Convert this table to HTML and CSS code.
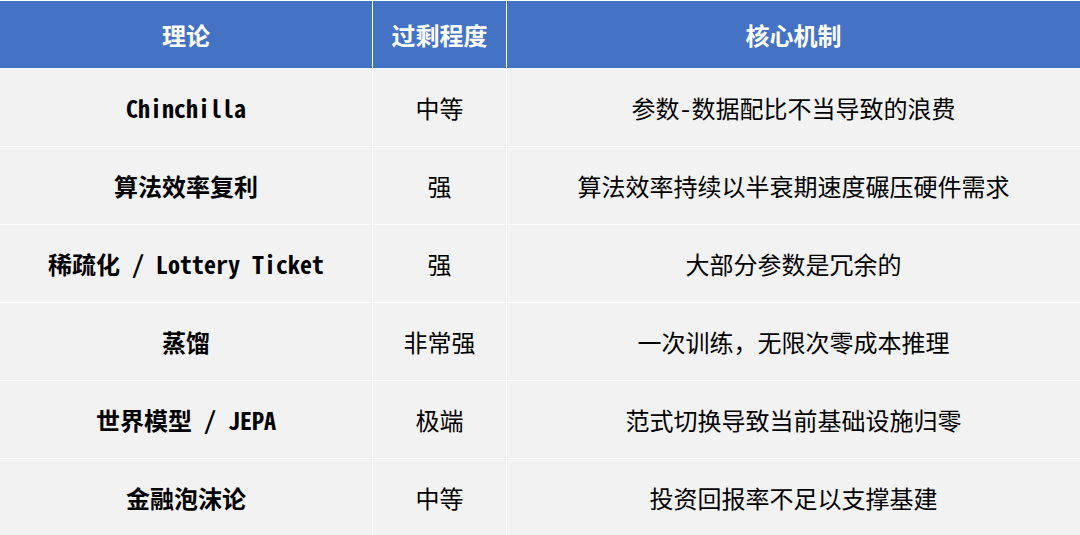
FILE: index.html
```html
<!DOCTYPE html>
<html lang="zh">
<head>
<meta charset="utf-8">
<link rel="stylesheet" href="styles.css">
</head>
<body>
<div class="table">
  <div class="cell head">理论</div>
  <div class="cell head">过剩程度</div>
  <div class="cell head">核心机制</div>

  <div class="cell name">Chinchilla</div>
  <div class="cell">中等</div>
  <div class="cell">参数-数据配比不当导致的浪费</div>

  <div class="cell name">算法效率复利</div>
  <div class="cell">强</div>
  <div class="cell">算法效率持续以半衰期速度碾压硬件需求</div>

  <div class="cell name">稀疏化 / Lottery Ticket</div>
  <div class="cell">强</div>
  <div class="cell">大部分参数是冗余的</div>

  <div class="cell name">蒸馏</div>
  <div class="cell">非常强</div>
  <div class="cell">一次训练，无限次零成本推理</div>

  <div class="cell name">世界模型 / JEPA</div>
  <div class="cell">极端</div>
  <div class="cell">范式切换导致当前基础设施归零</div>

  <div class="cell name">金融泡沫论</div>
  <div class="cell">中等</div>
  <div class="cell">投资回报率不足以支撑基建</div>
</div>
</body>
</html>
```
FILE: styles.css
```css
html, body {
  margin: 0;
  padding: 0;
  background: #ffffff;
  overflow: hidden;
}
.table {
  width: 1080px;
  height: 535px;
  padding-top: 1px;
  box-sizing: border-box;
  display: grid;
  grid-template-columns: 372px 133px 1fr;
  grid-template-rows: 67px repeat(6, 77px);
  gap: 1px;
  background: #ffffff;
}
.cell {
  background: #f2f2f2;
  display: flex;
  align-items: center;
  justify-content: center;
  font-family: "Noto Sans Mono CJK SC", "Noto Sans CJK SC", "Liberation Sans", sans-serif;
  font-size: 24px;
  color: #000000;
  white-space: pre;
}
.head {
  background: #4472c4;
  color: #ffffff;
  font-weight: 700;
  font-size: 24px;
}
.name {
  font-family: "Noto Sans Mono CJK SC", "DejaVu Sans Mono", "Noto Sans CJK SC", monospace;
  font-weight: 700;
  font-size: 24px;
}
```
